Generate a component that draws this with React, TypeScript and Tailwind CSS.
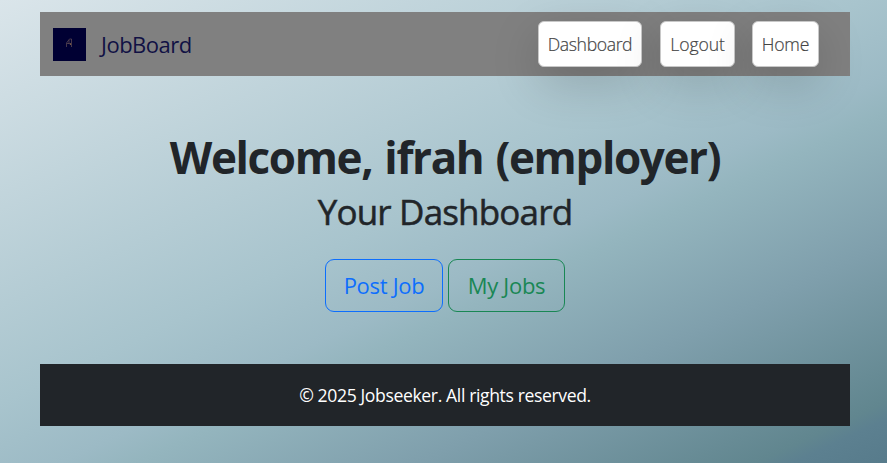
const navItems = [
  { label: 'Dashboard', box: 'w-[104px] mr-[18px]', text: 'tracking-[-0.37px]' },
  { label: 'Logout', box: 'w-[75px] mr-[17px]', text: 'tracking-[-0.1px]' },
  { label: 'Home', box: 'w-[67px]', text: 'tracking-[-0.2px]' },
];

function Logo() {
  return (
    <svg className="size-[33px] shrink-0" viewBox="0 0 33 33" fill="none">
      <rect width="33" height="33" fill="#000033" />
      <path d="M13.5 19v-4l3-4h2v8M14 15.5h2l2 1M16 12v4" stroke="#745c5c" strokeWidth="0.8" opacity="0.75" />
      <path d="M17 15.5h1v1h-1z" fill="#c08b4b" />
    </svg>
  );
}

export default function App() {
  return (
    <div className="h-[463px] w-[887px] overflow-hidden bg-[linear-gradient(155deg,#dae5ea_0%,#a8c4cd_46%,#9cbac5_56%,#94b5be_60%,#7f9fac_75%,#61868f_93%,#5c8090_95%,#577b8b_100%)] pt-3 pr-[37px] pl-10 font-['Open_Sans',sans-serif] text-[#212529]">
      <header className="flex h-16 items-center bg-[#808080] pr-[31px] pl-[13px]">
        <Logo />
        <span className="ml-[15px] text-[22px] tracking-[-0.5px] text-[#111144]">JobBoard</span>
        <nav className="ml-auto flex">
          {navItems.map((item) => (
            <a
              key={item.label}
              className={`flex h-[46px] items-center justify-center rounded-md border border-[#c8c8c8] bg-white text-[17.6px] font-light whitespace-nowrap text-[#444] shadow-[0_16px_48px_rgba(0,0,0,0.175)] [-webkit-text-stroke:0.2px_#444] ${item.box} ${item.text}`}
            >
              {item.label}
            </a>
          ))}
        </nav>
      </header>
      <main className="flex h-72 flex-col items-center pt-[55px]">
        <h1 className="text-[44px] leading-[53px] font-bold tracking-[-1.38px] [word-spacing:2px] whitespace-nowrap">Welcome, ifrah (employer)</h1>
        <h2 className="mt-[7px] text-[35px] leading-[42px] font-normal tracking-[-0.82px] [-webkit-text-stroke:0.5px_#212529] whitespace-nowrap">Your Dashboard</h2>
        <div className="mt-[26px] flex gap-[5px] text-[22px] tracking-[-0.3px]">
          <button className="h-[53px] w-[118px] rounded-[9px] border border-[#0d6efd] whitespace-nowrap text-[#0d6efd]">Post Job</button>
          <button className="h-[53px] w-[117px] rounded-[9px] border border-[#198754] whitespace-nowrap text-[#198754]">My Jobs</button>
        </div>
      </main>
      <footer className="flex h-[62px] items-center justify-center bg-[#212529] text-[17.6px] tracking-[-0.38px] text-white">
        © 2025 Jobseeker. All rights reserved.
      </footer>
    </div>
  );
}
